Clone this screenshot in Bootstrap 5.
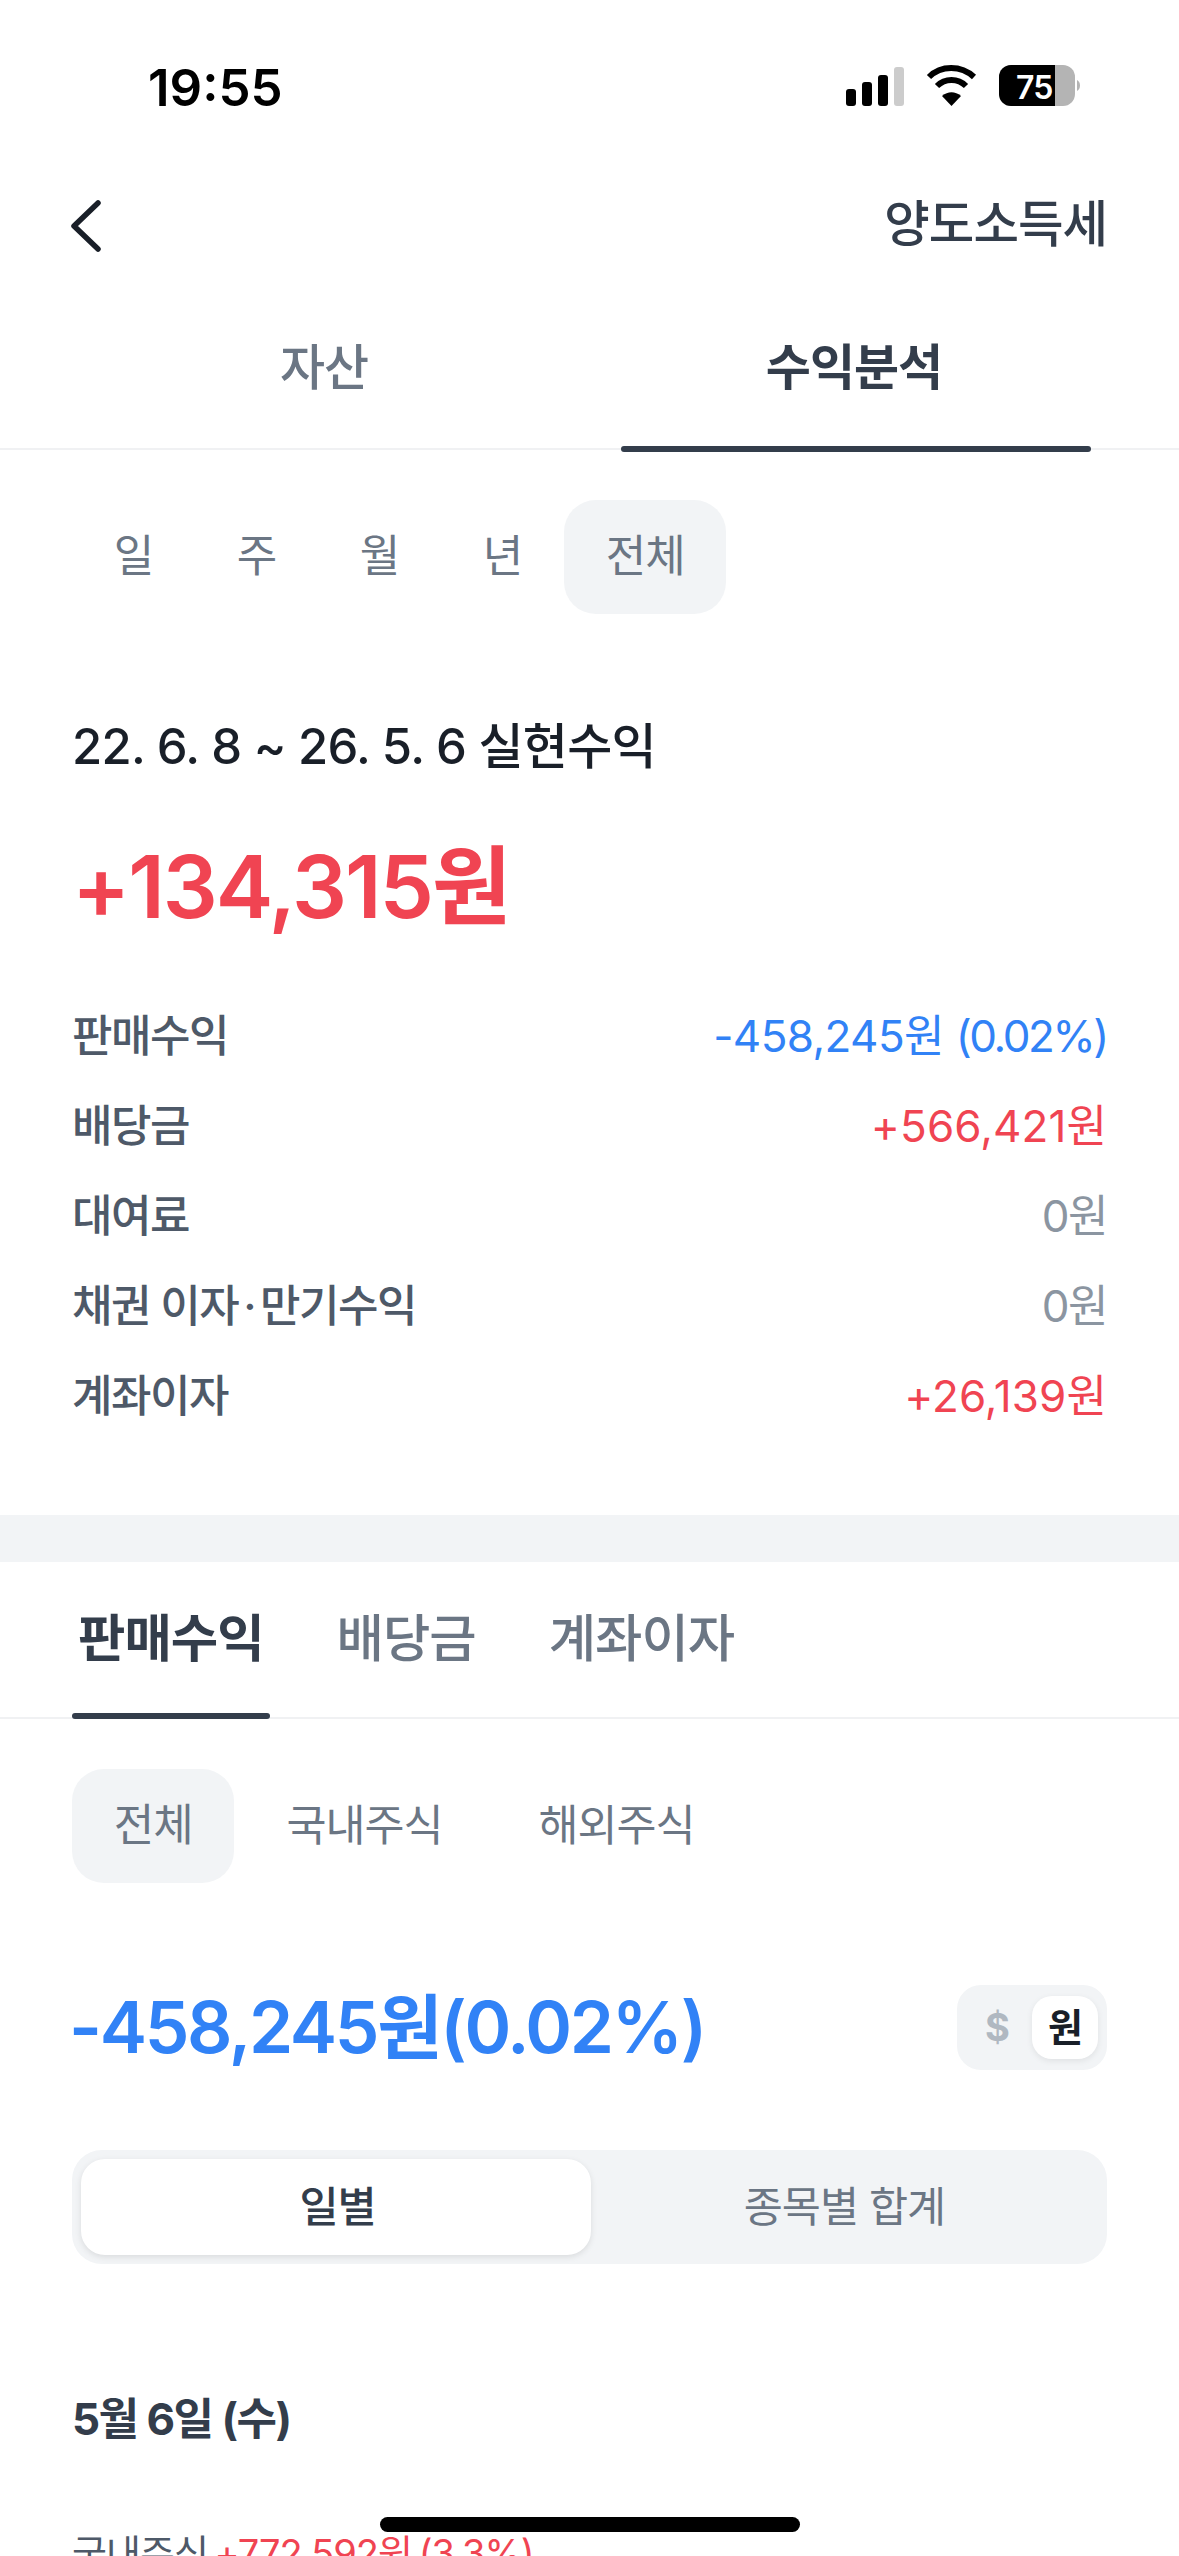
<!DOCTYPE html>
<html lang="ko">
<head>
    <title>수익분석</title>
    <meta name="viewport" content="width=device-width, initial-scale=1">
    <link href="https://cdn.jsdelivr.net/npm/bootstrap@5.3.0/dist/css/bootstrap.min.css" rel="stylesheet">
    <script src="https://cdn.jsdelivr.net/npm/bootstrap@5.3.0/dist/js/bootstrap.bundle.min.js"></script>
    <style>
        html, body { height: 2556px; overflow: hidden; }
        body {
            background: #fff;
            color: #333d4b;
            font-family: "Inter", "Noto Sans CJK KR", sans-serif;
            letter-spacing: -1px;
        }
        .phone { height: 2556px; position: relative; overflow: hidden; }
        .status-bar { height: 176px; padding: 57px 93px 0 148px; }
        .status-icons { margin-top: 5px; }
        .clock { font-size: 51px; font-weight: 600; color: #000; line-height: 62px; letter-spacing: 0; }
        .title-bar { height: 96px; padding: 0 72px 0 71px; }
        .title-bar svg { margin-top: 4px; }
        .title-text { font-size: 49.5px; font-weight: 500; padding-top: 1px; }
        .main-tabs { height: 178px; border-bottom: 2px solid #f0f1f3; }
        .main-tab { font-size: 49px; font-weight: 500; color: #6b7684; height: 178px; padding-top: 59px; text-align: center; position: relative; }
        .main-tab.first { width: 596px; margin-left: 26px; }
        .main-tab.on { width: 470px; margin-left: -1px; color: #333d4b; font-weight: 700; padding-right: 4px; }
        .main-tab.on::after { content: ""; position: absolute; left: 0; right: 0; bottom: -2px; height: 6px; background: #333d4b; border-radius: 3px; }
        .pill-row { padding: 50px 72px 0; height: 163px; }
        .pill-item { height: 114px; line-height: 112px; font-size: 44px; color: #6b7684; border-radius: 32px; padding: 0 41.75px; }
        .pill-item.on { background: #f2f4f6; }
        .pill-row.market .pill-item:not(.on) { font-size: 43.5px; padding: 0 44px; margin-left: 8px; }
        .range { font-size: 49px; font-weight: 500; color: #191f28; padding: 0 72px; margin-top: 99px; line-height: 70px; letter-spacing: -.75px; }
        .total-profit { font-size: 86.5px; font-weight: 600; color: #f04452; padding: 0 72px; margin-top: 50px; line-height: 110px; letter-spacing: -2px; }
        .stat-list { padding: 0 72px; margin-top: 49px; }
        .stat-row { height: 90px; font-size: 44px; font-weight: 500; color: #4e5968; letter-spacing: -1.5px; }
        .mid-dot { margin: 0 5px; }
        .stat-row .c-red, .stat-row .c-blue, .stat-row .c-gray { font-weight: 400; }
        .stat-row .c-red { letter-spacing: .1px; }
        .stat-row .c-blue { letter-spacing: -.6px; }
        .stat-row .pct { letter-spacing: -2.4px; }
        .c-red { color: #f04452; }
        .c-blue { color: #3182f6; }
        .c-gray { color: #8b95a1; }
        .gap-band { height: 47px; background: #f2f4f6; margin-top: 74px; }
        .sub-tabs { height: 157px; border-bottom: 2px solid #f0f1f3; padding: 0 72px; }
        .sub-tab { font-size: 51.5px; font-weight: 500; color: #6b7684; padding: 38px 6px 0; position: relative; margin-right: 61px; }
        .sub-tab.on { color: #333d4b; font-weight: 700; }
        .sub-tab.on::after { content: ""; position: absolute; left: 0; right: 0; bottom: -2px; height: 6px; background: #333d4b; border-radius: 3px; }
        .amount-row { padding: 0 72px; margin-top: 103px; height: 85px; }
        .amount { font-size: 71px; font-weight: 600; color: #3182f6; letter-spacing: -2.3px; margin-left: -3px; }
        .unit-toggle { width: 150px; height: 85px; background: #f2f4f6; border-radius: 24px; padding: 11px 9px 11px 28px; font-size: 38px; font-weight: 700; }
        .unit-on { width: 66px; height: 63px; background: #fff; border-radius: 20px; color: #191f28; box-shadow: 0 2px 6px rgba(0,0,0,.08); }
        .unit-off { color: #b0b8c1; }
        .view-switch { margin: 80px 72px 0; height: 114px; background: #f2f4f6; border-radius: 30px; padding: 9px; font-size: 42.5px; }
        .view-on { width: 510px; background: #fff; border-radius: 24px; font-weight: 500; padding-left: 3px; box-shadow: 0 2px 6px rgba(0,0,0,.1); }
        .view-off { color: #6b7684; }
        .day-label { font-size: 44px; font-weight: 700; padding: 0 72px; margin-top: 123px; line-height: 64px; letter-spacing: -1.5px; }
        .day-line { font-size: 38px; color: #4e5968; padding: 0 72px; margin-top: 72px; line-height: 60px; white-space: nowrap; letter-spacing: -1px; word-spacing: -3px; }
        .home-bar { position: absolute; left: 380px; top: 2517px; width: 420px; height: 15px; background: #000; border-radius: 8px; }
    </style>
</head>
<body>
<div class="phone">

    <div class="status-bar d-flex justify-content-between align-items-start">
        <div class="clock">19:55</div>
        <svg class="status-icons" width="240" height="50" viewBox="0 0 240 50">
            <rect x="0" y="27" width="10" height="17" rx="3" fill="#000"/>
            <rect x="16" y="20" width="10" height="24" rx="3" fill="#000"/>
            <rect x="32" y="13" width="10" height="31" rx="3" fill="#000"/>
            <rect x="48" y="5" width="10" height="39" rx="3" fill="#ccc"/>
            <path d="M83 15 C95 3 115 3 128 15" fill="none" stroke="#000" stroke-width="6"/>
            <path d="M91 24 C99 16 112 16 120 24" fill="none" stroke="#000" stroke-width="6"/>
            <path d="M105.500 44 L96 34 C102 29 109 29 115 34 Z" fill="#000"/>
            <rect x="153" y="3" width="76" height="41" rx="12" fill="#b4b4b4"/>
            <path d="M165 3 H209 V44 H165 A12 12 0 0 1 153 32 V15 A12 12 0 0 1 165 3 Z" fill="#000"/>
            <path d="M231 18 C235 20 235 27 231 29 Z" fill="#b4b4b4"/>
            <text x="170" y="37" font-family="Inter" font-size="32" font-weight="600" fill="#fff">75</text>
        </svg>
    </div>

    <div class="title-bar d-flex justify-content-between align-items-center">
        <svg width="30" height="52" viewBox="0 0 30 52"><path d="M27 3 L3 26 L27 49" fill="none" stroke="#191f28" stroke-width="5.500" stroke-linecap="round" stroke-linejoin="round"/></svg>
        <div class="title-text">양도소득세</div>
    </div>

    <div class="main-tabs d-flex">
        <div class="main-tab first">자산</div>
        <div class="main-tab on">수익분석</div>
    </div>

    <div class="pill-row d-flex">
        <div class="pill-item">일</div>
        <div class="pill-item">주</div>
        <div class="pill-item">월</div>
        <div class="pill-item">년</div>
        <div class="pill-item on">전체</div>
    </div>

    <div class="range">22. 6. 8 ~ 26. 5. 6 실현수익</div>
    <div class="total-profit">+134,315원</div>

    <div class="stat-list">
        <div class="stat-row d-flex justify-content-between align-items-center"><span>판매수익</span><span class="c-blue">-458,245원 <span class="pct">(0.02%)</span></span></div>
        <div class="stat-row d-flex justify-content-between align-items-center"><span>배당금</span><span class="c-red">+566,421원</span></div>
        <div class="stat-row d-flex justify-content-between align-items-center"><span>대여료</span><span class="c-gray">0원</span></div>
        <div class="stat-row d-flex justify-content-between align-items-center"><span>채권 이자<span class="mid-dot">·</span>만기수익</span><span class="c-gray">0원</span></div>
        <div class="stat-row d-flex justify-content-between align-items-center"><span>계좌이자</span><span class="c-red">+26,139원</span></div>
    </div>

    <div class="gap-band"></div>

    <div class="sub-tabs d-flex">
        <div class="sub-tab on">판매수익</div>
        <div class="sub-tab">배당금</div>
        <div class="sub-tab">계좌이자</div>
    </div>

    <div class="pill-row market d-flex">
        <div class="pill-item on">전체</div>
        <div class="pill-item">국내주식</div>
        <div class="pill-item">해외주식</div>
    </div>

    <div class="amount-row d-flex justify-content-between align-items-center">
        <div class="amount">-458,245원(0.02%)</div>
        <div class="unit-toggle d-flex justify-content-between align-items-center">
            <span class="unit-off">$</span>
            <span class="unit-on d-flex justify-content-center align-items-center">원</span>
        </div>
    </div>

    <div class="view-switch d-flex">
        <div class="view-on d-flex justify-content-center align-items-center">일별</div>
        <div class="view-off flex-grow-1 d-flex justify-content-center align-items-center">종목별 합계</div>
    </div>

    <div class="day-label">5월 6일 (수)</div>
    <div class="day-line">국내주식 <span class="c-red">+772,592원 (3.3%)</span></div>

    <div class="home-bar"></div>
</div>
</body>
</html>
